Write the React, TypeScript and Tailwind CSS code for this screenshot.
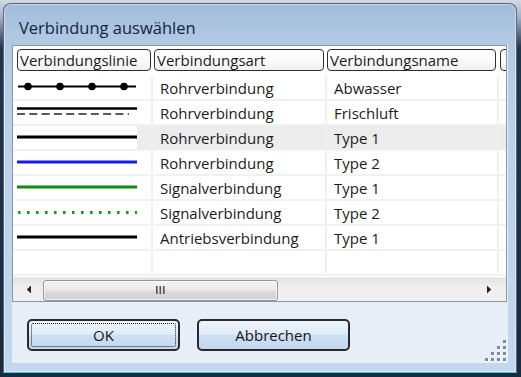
import React from "react";

type LineKind = "dots" | "double" | "black" | "blue" | "green" | "greendots" | "none";

const rows: { line: LineKind; art: string; name: string; hl?: boolean }[] = [
  { line: "dots", art: "Rohrverbindung", name: "Abwasser" },
  { line: "double", art: "Rohrverbindung", name: "Frischluft" },
  { line: "black", art: "Rohrverbindung", name: "Type 1", hl: true },
  { line: "blue", art: "Rohrverbindung", name: "Type 2" },
  { line: "green", art: "Signalverbindung", name: "Type 1" },
  { line: "greendots", art: "Signalverbindung", name: "Type 2" },
  { line: "black", art: "Antriebsverbindung", name: "Type 1" },
  { line: "none", art: "", name: "" },
];

function LineSample({ kind }: { kind: LineKind }) {
  if (kind === "none") return null;
  return (
    <svg width="120" height="23" viewBox="0 0 120 23" className="block">
      {kind === "dots" && (
        <g fill="#000">
          <line x1="1" y1="10.5" x2="119" y2="10.5" stroke="#000" strokeWidth="2" />
          <circle cx="11" cy="10.5" r="3.8" />
          <circle cx="43" cy="10.5" r="3.8" />
          <circle cx="75" cy="10.5" r="3.8" />
          <circle cx="107" cy="10.5" r="3.8" />
        </g>
      )}
      {kind === "double" && (
        <g>
          <line x1="0" y1="7.5" x2="120" y2="7.5" stroke="#000" strokeWidth="2.6" />
          <line x1="0" y1="13" x2="112" y2="13" stroke="#222" strokeWidth="1.5" strokeDasharray="8 4.3" />
        </g>
      )}
      {kind === "black" && <line x1="0" y1="11" x2="120" y2="11" stroke="#000" strokeWidth="2.8" />}
      {kind === "blue" && <line x1="0" y1="11" x2="120" y2="11" stroke="#1818f4" strokeWidth="2.8" />}
      {kind === "green" && <line x1="0" y1="11" x2="120" y2="11" stroke="#0e8c0e" strokeWidth="2.8" />}
      {kind === "greendots" && (
        <line x1="1" y1="11.5" x2="120" y2="11.5" stroke="#12a012" strokeWidth="3" strokeDasharray="2.6 6.4" />
      )}
    </svg>
  );
}

function HeaderCell({ label, className }: { label: string; className: string }) {
  return (
    <div
      className={
        "h-[22px] shrink-0 rounded-[4px] border-[1.5px] border-[#2e2e2e] bg-[linear-gradient(to_bottom,#ffffff_0%,#fbfbfb_50%,#f0f0f0_100%)] pl-[2px] pt-[1px] flex items-center overflow-hidden whitespace-nowrap text-[15px] leading-none text-[#1b1b1b] " +
        className
      }
    >
      {label}
    </div>
  );
}

function Button({ label, focus }: { label: string; focus?: boolean }) {
  return (
    <div className="w-[153px] h-[32px] rounded-[5px] border-2 border-[#2a2a2a] bg-[linear-gradient(to_bottom,#eef5fc_0%,#e1ecf8_45%,#cde0f3_52%,#c2d8ef_100%)] p-[2px]">
      <div
        className={
          "w-full h-full rounded-[2px] flex items-center justify-center text-[15px] leading-none text-[#151515] " +
          (focus ? "border border-dotted border-[#222]" : "border border-transparent")
        }
      >
        {label}
      </div>
    </div>
  );
}

export default function App() {
  return (
    <div
      className="w-[521px] h-[377px] overflow-hidden pt-[3px] pl-[3px] bg-[linear-gradient(to_bottom,#d4dae2_0px,#a3afbf_18px,#24354c_48px,#1b2a3f_100%)]"
      style={{ fontFamily: '"Open Sans", "Noto Sans", Arial, sans-serif' }}
    >
      <div className="w-[514px] h-[370px] rounded-t-[8px] border border-[#55677e] border-b-[#3ccbeb] shadow-[inset_0_0_0_1px_rgba(255,255,255,0.45)] bg-[linear-gradient(to_bottom,#a1bddb_0px,#b2cae4_40px,#bad1ea_120px,#c3d8ee_100%)] flex flex-col px-[8px]">
        {/* title bar */}
        <div className="h-[41px] shrink-0 flex items-center pl-[7px] pt-[7px] text-[16.5px] leading-none text-[#14243d]">
          Verbindung auswählen
        </div>
        {/* client */}
        <div className="relative w-[496px] h-[318px] bg-[#e7eef8] flex flex-col">
          {/* list box */}
          <div className="w-[495px] h-[257px] border border-[#8b96a4] bg-white flex flex-col overflow-hidden">
            {/* header */}
            <div className="h-[30px] shrink-0 flex pt-[3px] overflow-hidden">
              <HeaderCell label="Verbindungslinie" className="ml-[4px] w-[134px]" />
              <HeaderCell label="Verbindungsart" className="ml-[3px] w-[170px]" />
              <HeaderCell label="Verbindungsname" className="ml-[3px] w-[169px]" />
              <HeaderCell label="" className="ml-[4px] w-[24px]" />
            </div>
            {/* rows */}
            <div className="h-[201px] shrink-0 overflow-hidden">
              {rows.map((r, i) => (
                <div
                  key={i}
                  className={
                    "h-[25px] flex border-b-2 border-[#f1f1f1] text-[15px] leading-none text-[#1b1b1b] " +
                    (r.hl ? "bg-[#ececec]" : "bg-white")
                  }
                >
                  <div className="w-[140px] shrink-0 border-r-2 border-[#f1f1f1] flex">
                    <div className="w-[124px] h-full bg-white pl-[4px]">
                      <LineSample kind={r.line} />
                    </div>
                  </div>
                  <div className="w-[174px] shrink-0 border-r-2 border-[#f1f1f1] pl-[7px] pt-[1px] flex items-center whitespace-nowrap">
                    {r.art}
                  </div>
                  <div className="w-[172px] shrink-0 border-r-2 border-[#f1f1f1] pl-[7px] pt-[1px] flex items-center whitespace-nowrap">
                    {r.name}
                  </div>
                  <div className="flex-1" />
                </div>
              ))}
            </div>
            {/* horizontal scrollbar */}
            <div className="h-[24px] shrink-0 flex items-center bg-[linear-gradient(to_bottom,#e3e3e3_0%,#efefef_40%,#f0f0f0_100%)] border-t border-[#ececec]">
              <div className="w-[30px] h-full shrink-0 flex items-center justify-center pl-[2px]">
                <svg width="6" height="9" viewBox="0 0 6 9">
                  <path d="M5 0.5 L0.8 4.5 L5 8.5 Z" fill="#222" />
                </svg>
              </div>
              <div className="w-[235px] h-[21px] shrink-0 rounded-[3px] border border-[#979797] bg-[linear-gradient(to_bottom,#f3f3f3_0%,#ebebeb_45%,#dbdbdb_55%,#cfcfcf_100%)] shadow-[inset_0_0_0_1px_rgba(255,255,255,0.7)] flex items-center justify-center mt-[1px]">
                <svg width="9" height="8" viewBox="0 0 9 8">
                  <rect x="0" y="0" width="1.6" height="8" fill="#555" />
                  <rect x="3.5" y="0" width="1.6" height="8" fill="#555" />
                  <rect x="7" y="0" width="1.6" height="8" fill="#555" />
                </svg>
              </div>
              <div className="flex-1" />
              <div className="w-[28px] h-full shrink-0 flex items-center justify-center pr-[6px]">
                <svg width="6" height="9" viewBox="0 0 6 9">
                  <path d="M1 0.5 L5.2 4.5 L1 8.5 Z" fill="#222" />
                </svg>
              </div>
            </div>
          </div>
          {/* buttons */}
          <div className="flex gap-[17px] pl-[15px] pt-[17px]">
            <Button label="OK" focus />
            <Button label="Abbrechen" />
          </div>
          {/* resize grip */}
          <svg className="absolute right-[1px] bottom-[1px]" width="22" height="22" viewBox="0 0 22 22">
            {[
              [18, 0],
              [12, 6],
              [18, 6],
              [6, 12],
              [12, 12],
              [18, 12],
              [0, 18],
              [6, 18],
              [12, 18],
              [18, 18],
            ].map(([x, y], i) => (
              <g key={i}>
                <rect x={x + 1} y={y + 1} width="3" height="3" fill="#ffffff" />
                <rect x={x} y={y} width="3" height="3" fill="#7d8a99" />
              </g>
            ))}
          </svg>
        </div>
      </div>
    </div>
  );
}
